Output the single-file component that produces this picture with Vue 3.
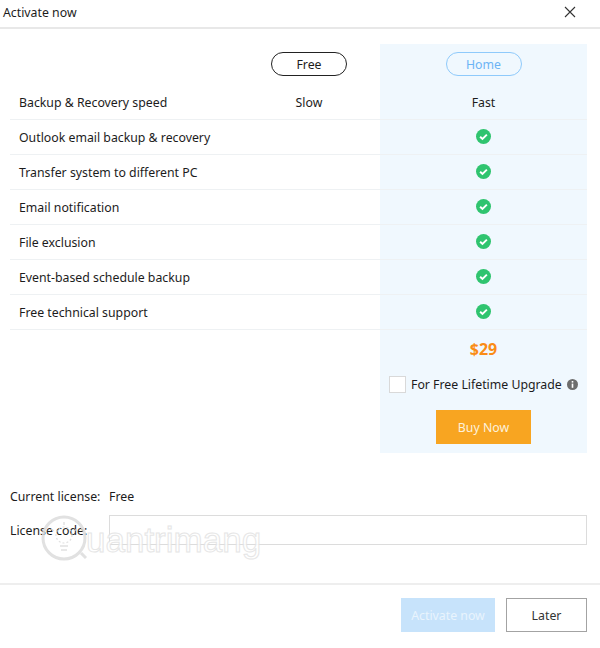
<template>
  <div class="window">
    <header class="titlebar">
      <span>Activate now</span>
      <svg class="close" width="12" height="12" viewBox="0 0 12 12">
        <path d="M1 1l10 10M11 1L1 11" stroke="#333" stroke-width="1.1" fill="none" />
      </svg>
    </header>

    <section class="table">
      <div class="row head">
        <div></div>
        <div class="cell"><span class="pill">Free</span></div>
        <div class="cell home"><span class="pill pill-home">Home</span></div>
      </div>
      <div v-for="(f, i) in features" :key="f" class="row" :class="{ first: i === 0 }">
        <div class="name">{{ f }}</div>
        <div class="cell">{{ i === 0 ? "Slow" : "" }}</div>
        <div class="cell home">
          <template v-if="i === 0">Fast</template>
          <svg v-else class="tick" width="15" height="15" viewBox="0 0 16 16">
            <circle cx="8" cy="8" r="8" fill="#2fc46f" />
            <path d="M4.4 8.2l2.5 2.4 4.7-4.6" stroke="#fff" stroke-width="2.1" fill="none" />
          </svg>
        </div>
      </div>
      <div class="buy-row">
        <div class="buy">
          <div class="price">$29</div>
          <div class="upgrade">
            <span class="check"></span>
            <span>For Free Lifetime Upgrade</span>
            <svg class="info" width="11" height="11" viewBox="0 0 11 11">
              <circle cx="5.5" cy="5.5" r="5.5" fill="#6d6d6d" />
              <rect x="4.7" y="2" width="1.6" height="1.6" fill="#fff" />
              <rect x="4.7" y="4.6" width="1.6" height="4.2" fill="#fff" />
            </svg>
          </div>
          <button class="buy-btn">Buy Now</button>
        </div>
      </div>
    </section>

    <section class="license">
      <div class="lic-row">
        <span class="lic-label">Current license:</span>
        <span>Free</span>
      </div>
      <div class="lic-row code">
        <span class="lic-label">License code:</span>
        <div class="input"></div>
      </div>
      <div class="watermark">
        <svg width="46" height="46" viewBox="0 0 46 46" fill="none" stroke="#dcdcdc">
          <circle cx="23" cy="23" r="21" stroke-width="3" />
          <path d="M40 38l5 5" stroke-width="3" />
          <circle cx="23" cy="20" r="8" stroke-width="1.2" stroke-dasharray="2 2" />
          <path d="M19 31h8M20 35h6M10 14l3 2M36 14l-3 2M23 7v3" stroke-width="1.4" />
        </svg>
        <span>uantrimang</span>
      </div>
    </section>

    <footer class="footer">
      <button class="btn activate">Activate now</button>
      <button class="btn later">Later</button>
    </footer>
  </div>
</template>

<script setup>
const features = [
  "Backup & Recovery speed",
  "Outlook email backup & recovery",
  "Transfer system to different PC",
  "Email notification",
  "File exclusion",
  "Event-based schedule backup",
  "Free technical support",
];
</script>

<style scoped>
.window {
  width: 600px;
  height: 648px;
  background: #fff;
  color: #1c1c1c;
  font-family: "Noto Sans", "Open Sans", sans-serif;
  font-size: 12.3px;
  box-sizing: border-box;
  display: flex;
  flex-direction: column;
  overflow: hidden;
}
.titlebar {
  height: 29px;
  padding: 0 24px 3px 3px;
  box-sizing: border-box;
  flex: none;
  display: flex;
  align-items: center;
  justify-content: space-between;
  border-bottom: 2px solid #e8e8e8;
}
.table {
  margin: 15px 13px 0 10px;
  flex: none;
}
.row {
  display: grid;
  grid-template-columns: 228px 142px 207px;
  height: 35px;
  box-sizing: border-box;
  border-bottom: 1px solid #eef1f3;
}
.row.head {
  height: 42px;
  border-bottom: none;
  align-items: stretch;
}
.row.first {
  height: 34px;
}
.name {
  padding-left: 9px;
  display: flex;
  align-items: center;
}
.cell {
  display: flex;
  align-items: center;
  justify-content: center;
}
.tick {
  margin-bottom: 2px;
}
.head .cell {
  align-items: flex-start;
  padding-top: 8px;
}
.home {
  background: #f0f8fe;
}
.pill {
  width: 76px;
  height: 24px;
  box-sizing: border-box;
  border: 1px solid #222;
  border-radius: 12px;
  display: flex;
  align-items: center;
  justify-content: center;
}
.pill-home {
  border-color: #8fcafb;
  color: #6cb4f5;
}
.buy-row {
  display: flex;
  justify-content: flex-end;
}
.buy {
  width: 207px;
  height: 123px;
  background: #f0f8fe;
  display: flex;
  flex-direction: column;
  align-items: center;
  box-sizing: border-box;
  padding-top: 9px;
}
.price {
  color: #fa8c16;
  font-size: 16px;
  font-weight: 700;
  line-height: 21px;
}
.upgrade {
  align-self: flex-start;
  margin: 16px 0 0 9px;
  display: flex;
  align-items: center;
  height: 17px;
}
.check {
  width: 17px;
  height: 17px;
  box-sizing: border-box;
  background: #fff;
  border: 1px solid #d9d9d9;
  margin-right: 5px;
}
.info {
  margin-left: 5px;
}
.buy-btn {
  width: 95px;
  height: 34px;
  margin-top: 17px;
  border: none;
  background: #f8a521;
  color: #fdf1dc;
  font: inherit;
}
.license {
  position: relative;
  flex: none;
  margin: 34px 13px 0 10px;
  height: 96px;
}
.lic-row {
  display: flex;
  align-items: center;
  height: 19px;
}
.lic-row.code {
  margin-top: 9px;
  height: 30px;
}
.lic-label {
  width: 99px;
  flex: none;
}
.input {
  flex: 1;
  height: 30px;
  box-sizing: border-box;
  border: 1px solid #dcdcdc;
  background: #fff;
}
.watermark {
  position: absolute;
  left: 31px;
  top: 28px;
  display: flex;
  align-items: center;
  opacity: 0.85;
}
.watermark span {
  font-family: "Liberation Sans", sans-serif;
  font-size: 35px;
  color: #fff;
  -webkit-text-stroke: 1px #e2e2e2;
  margin-left: -1px;
  margin-top: 4px;
}
.footer {
  flex: none;
  border-top: 2px solid #eeeeee;
  padding: 13px 13px 0 0;
  display: flex;
  justify-content: flex-end;
  gap: 11px;
}
.btn {
  height: 34px;
  box-sizing: border-box;
  font: inherit;
}
.activate {
  width: 94px;
  border: none;
  background: #c7e3fb;
  color: #e9f4fd;
}
.later {
  width: 81px;
  background: #fff;
  border: 1px solid #a3a3a3;
  color: #333;
}
</style>
